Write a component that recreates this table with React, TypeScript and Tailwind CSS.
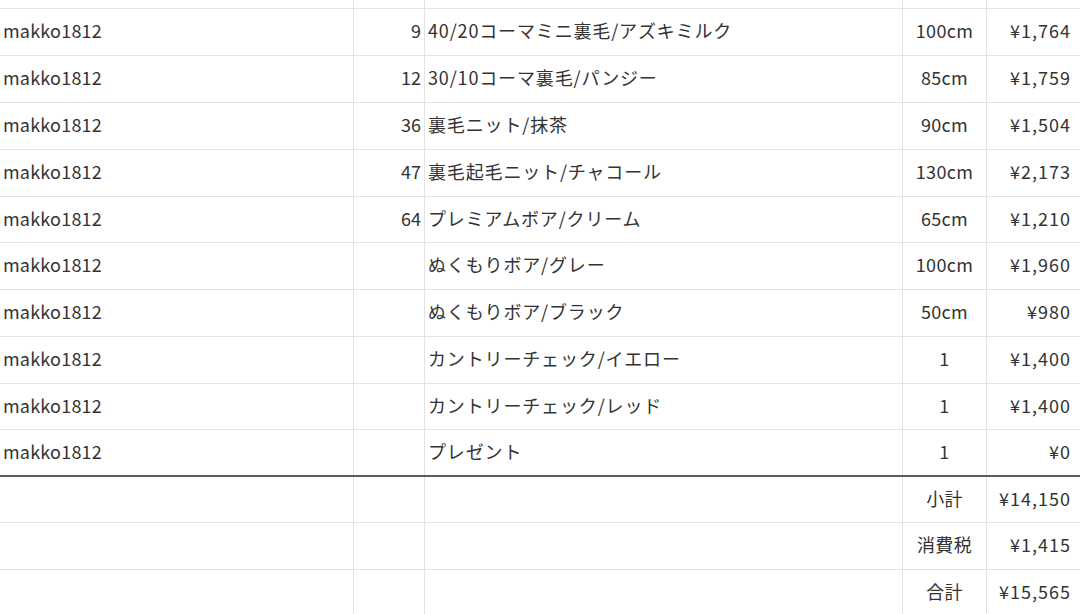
import React from "react";

type Row = [string, string, string, string, string];

const rows: Row[] = [
  ["makko1812", "9", "40/20コーマミニ裏毛/アズキミルク", "100cm", "¥1,764"],
  ["makko1812", "12", "30/10コーマ裏毛/パンジー", "85cm", "¥1,759"],
  ["makko1812", "36", "裏毛ニット/抹茶", "90cm", "¥1,504"],
  ["makko1812", "47", "裏毛起毛ニット/チャコール", "130cm", "¥2,173"],
  ["makko1812", "64", "プレミアムボア/クリーム", "65cm", "¥1,210"],
  ["makko1812", "", "ぬくもりボア/グレー", "100cm", "¥1,960"],
  ["makko1812", "", "ぬくもりボア/ブラック", "50cm", "¥980"],
  ["makko1812", "", "カントリーチェック/イエロー", "1", "¥1,400"],
  ["makko1812", "", "カントリーチェック/レッド", "1", "¥1,400"],
  ["makko1812", "", "プレゼント", "1", "¥0"],
  ["", "", "", "小計", "¥14,150"],
  ["", "", "", "消費税", "¥1,415"],
  ["", "", "", "合計", "¥15,565"],
];

const heights = [47, 47, 47, 47, 46, 47, 47, 47, 46, 47, 46, 47, 46];

function Cells({ r }: { r: Row }) {
  return (
    <>
      <div className="w-[354px] shrink-0 border-r border-[#e3e3e3] pl-[3px] pb-[4px] flex items-center tracking-[0.2px]">{r[0]}</div>
      <div className="w-[71px] shrink-0 border-r border-[#e3e3e3] pr-[3px] pb-[4px] flex items-center justify-end">{r[1]}</div>
      <div className="w-[478px] shrink-0 border-r border-[#e3e3e3] pl-[3px] pb-[4px] flex items-center whitespace-nowrap tracking-[0.85px]">{r[2]}</div>
      <div className="w-[84px] shrink-0 border-r border-[#e3e3e3] pb-[4px] flex items-center justify-center tracking-[0.3px]">{r[3]}</div>
      <div className="w-[94px] shrink-0 pr-[10px] pb-[4px] flex items-center justify-end tracking-[1px]">{r[4]}</div>
    </>
  );
}

export default function App() {
  return (
    <div
      className="w-[1080px] h-[614px] overflow-hidden bg-white text-[#333333] text-[18px] leading-none"
      style={{ fontFamily: '"Noto Sans CJK JP", "Noto Sans", sans-serif' }}
    >
      <div className="flex h-[9px] border-b border-[#e3e3e3]">
        <Cells r={["", "", "", "", ""]} />
      </div>
      {rows.map((r, i) => (
        <div
          key={i}
          className={
            "flex " +
            (i === 9
              ? "border-b-2 border-[#5c5c5c]"
              : i === rows.length - 1
              ? ""
              : "border-b border-[#e3e3e3]")
          }
          style={{ height: heights[i] }}
        >
          <Cells r={r} />
        </div>
      ))}
    </div>
  );
}
